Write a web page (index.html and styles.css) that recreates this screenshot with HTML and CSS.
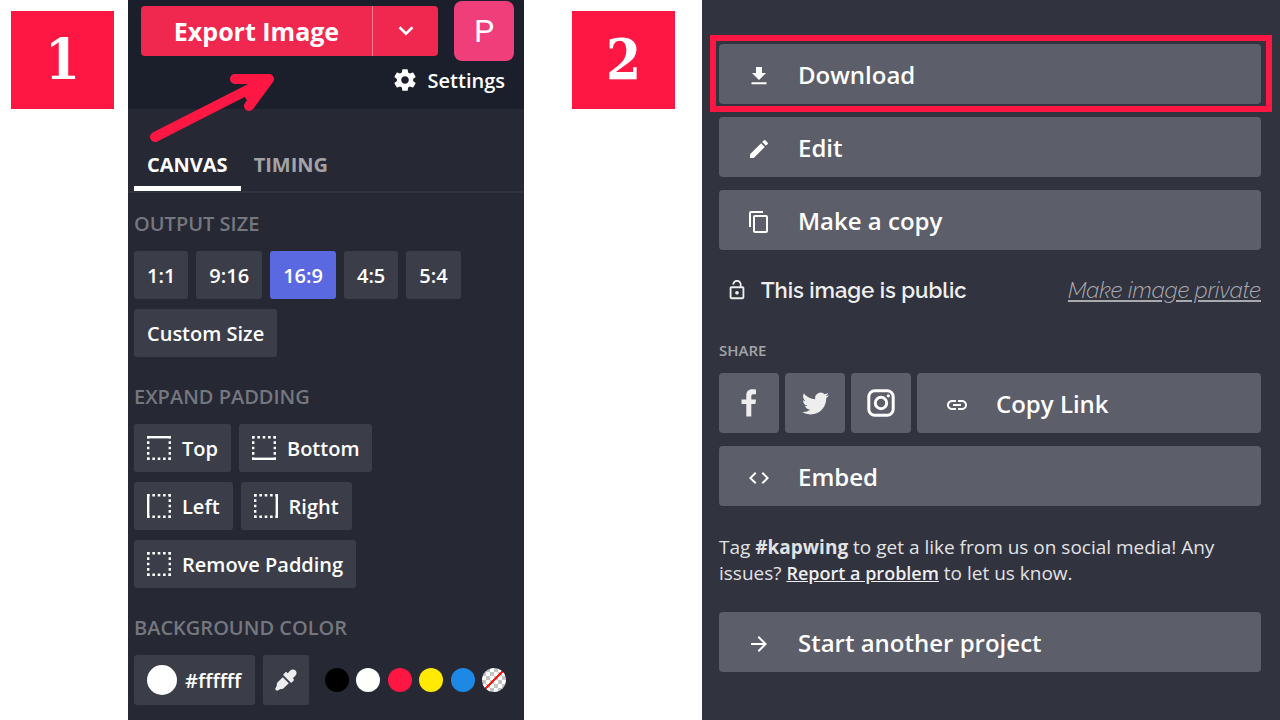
FILE: index.html
```html
<!DOCTYPE html>
<html lang="en">
<head>
<meta charset="utf-8">
<meta name="viewport" content="width=device-width, initial-scale=1">
<title>Export and download</title>
<link rel="stylesheet" href="styles.css">
</head>
<body>
<svg class="defs" aria-hidden="true">
  <defs>
    <path id="dots-h" d="M0 1.200H24" fill="none" stroke="currentColor" stroke-width="2.400" stroke-dasharray="2.600 2.750"/>
    <path id="dots-v" d="M1.200 0V24" fill="none" stroke="currentColor" stroke-width="2.400" stroke-dasharray="2.600 2.750"/>
  </defs>
</svg>
<main class="page">
  <div class="step"><span class="badge">1</span></div>

  <section class="editor" aria-label="Editor">
    <header class="topbar">
      <div class="topbar-row">
        <div class="export">
          <button class="export-main" type="button">Export Image</button>
          <button class="export-more" type="button" aria-label="More export options">
            <svg width="16" height="10" viewBox="0 0 16 10" fill="none" stroke="currentColor" stroke-width="2.6"><path d="M1.5 1.2 8 7.6l6.500-6.400"/></svg>
          </button>
        </div>
        <button class="avatar" type="button" aria-label="Profile P">P</button>
      </div>
      <button class="settings" type="button">
        <svg width="26" height="26" viewBox="0 0 24 24" fill="currentColor"><path d="M19.430 12.980c.04-.32.07-.64.07-.98s-.03-.66-.07-.98l2.110-1.650c.19-.15.24-.42.12-.64l-2-3.460c-.12-.22-.39-.3-.61-.22l-2.490 1c-.52-.4-1.080-.73-1.690-.98l-.38-2.650C14.460 2.180 14.250 2 14 2h-4c-.25 0-.46.18-.49.42l-.38 2.650c-.61.25-1.170.59-1.690.98l-2.490-1c-.23-.09-.49 0-.61.22l-2 3.460c-.13.22-.07.49.12.64l2.110 1.650c-.04.32-.07.65-.07.98s.03.66.07.98l-2.110 1.650c-.19.15-.24.42-.12.64l2 3.460c.12.22.39.3.61.22l2.490-1c.52.4 1.080.73 1.690.98l.38 2.650c.03.24.24.42.49.42h4c.25 0 .46-.18.49-.42l.38-2.650c.61-.25 1.170-.59 1.690-.98l2.490 1c.23.09.49 0 .61-.22l2-3.460c.12-.22.07-.49-.12-.64zM12 15.500c-1.930 0-3.500-1.570-3.500-3.500s1.570-3.500 3.500-3.500 3.500 1.570 3.500 3.500-1.570 3.500-3.500 3.500z"/></svg>
        <span>Settings</span>
      </button>
    </header>

    <nav class="tabs">
      <button class="tab tab-active" type="button">CANVAS</button>
      <button class="tab" type="button">TIMING</button>
    </nav>

    <div class="options">
      <section>
        <h2>OUTPUT SIZE</h2>
        <div class="chips">
          <button class="chip" type="button">1:1</button>
          <button class="chip" type="button">9:16</button>
          <button class="chip chip-on" type="button">16:9</button>
          <button class="chip" type="button">4:5</button>
          <button class="chip" type="button">5:4</button>
          <button class="chip" type="button">Custom Size</button>
        </div>
      </section>
      <section>
        <h2>EXPAND PADDING</h2>
        <div class="chips">
          <button class="chip" type="button"><svg width="24" height="24" viewBox="0 0 24 24"><path d="M0 0h24v2.400H0z" fill="currentColor"/><use href="#dots-h" y="21.600"/><use href="#dots-v"/><use href="#dots-v" x="21.600"/></svg>Top</button>
          <button class="chip" type="button"><svg width="24" height="24" viewBox="0 0 24 24"><path d="M0 21.600h24V24H0z" fill="currentColor"/><use href="#dots-h"/><use href="#dots-v"/><use href="#dots-v" x="21.600"/></svg>Bottom</button>
          <button class="chip" type="button"><svg width="24" height="24" viewBox="0 0 24 24"><path d="M0 0h2.400v24H0z" fill="currentColor"/><use href="#dots-h"/><use href="#dots-h" y="21.600"/><use href="#dots-v" x="21.600"/></svg>Left</button>
          <button class="chip" type="button"><svg width="24" height="24" viewBox="0 0 24 24"><path d="M21.600 0H24v24h-2.400z" fill="currentColor"/><use href="#dots-h"/><use href="#dots-h" y="21.600"/><use href="#dots-v"/></svg>Right</button>
          <button class="chip" type="button"><svg width="24" height="24" viewBox="0 0 24 24"><use href="#dots-h"/><use href="#dots-h" y="21.600"/><use href="#dots-v"/><use href="#dots-v" x="21.600"/></svg>Remove Padding</button>
        </div>
      </section>
      <section>
        <h2 id="bg-label">BACKGROUND COLOR</h2>
        <div class="color-row">
          <div class="hex">
            <span class="hex-dot"></span>
            <input class="hex-input" type="text" value="#ffffff" aria-labelledby="bg-label">
          </div>
          <button class="dropper" type="button" aria-label="Pick a color">
            <svg width="22" height="22" viewBox="0 0 22 22" fill="currentColor"><path d="M20.500 1.500c-1.500-1.500-3.900-1.300-5.300.1l-2.400 2.600-.9-.8c-.5-.5-1.100-.5-1.600 0L8.700 5c-.5.500-.5 1.100 0 1.600l6.700 6.700c.5.500 1.100.5 1.600 0l1.600-1.600c.5-.5.500-1.100 0-1.600l-.8-.9 2.600-2.400c1.400-1.400 1.600-3.800.1-5.300z"/><path d="M7.800 8.200 2.900 13.100c-1 1-1.100 2-1.200 3.900L.4 19.300c-.5 1 .9 2.600 2.300 2.300L5 20.300c1.900-.1 2.900-.2 3.900-1.200l4.900-4.900z"/></svg>
          </button>
          <div class="swatches">
            <button class="swatch black" type="button" aria-label="Black"></button>
            <button class="swatch white" type="button" aria-label="White"></button>
            <button class="swatch red" type="button" aria-label="Red"></button>
            <button class="swatch yellow" type="button" aria-label="Yellow"></button>
            <button class="swatch blue" type="button" aria-label="Blue"></button>
            <button class="swatch clear" type="button" aria-label="Transparent"></button>
          </div>
        </div>
      </section>
    </div>

    <svg class="pointer" width="130" height="76" viewBox="0 0 130 76" fill="none" stroke="#ff1744" stroke-width="10" stroke-linecap="round" stroke-linejoin="round" aria-hidden="true"><path d="M7 69 121 11M87 11h34L101 38M119 12l-17 16"/></svg>
  </section>

  <div class="step step-two"><span class="badge">2</span></div>

  <section class="publish" aria-label="Publish">
    <div class="stack">
      <div class="marked">
        <button class="action" type="button"><svg width="24" height="24" viewBox="0 0 24 24" fill="currentColor"><path d="M19 9h-4V3H9v6H5l7 7 7-7zM4.500 18.300v2h15v-2z"/></svg>Download</button>
      </div>
      <button class="action" type="button"><svg width="24" height="24" viewBox="0 0 24 24" fill="currentColor"><path d="M3 17.250V21h3.750L17.810 9.940l-3.750-3.750zM20.710 7.040a1 1 0 0 0 0-1.410l-2.340-2.340a1 1 0 0 0-1.410 0l-1.830 1.830 3.750 3.750z"/></svg>Edit</button>
      <button class="action" type="button"><svg width="24" height="24" viewBox="0 0 24 24" fill="currentColor"><path d="M16 1H4c-1.100 0-2 .9-2 2v14h2V3h12V1zm3 4H8c-1.100 0-2 .9-2 2v14c0 1.100.9 2 2 2h11c1.100 0 2-.9 2-2V7c0-1.100-.9-2-2-2zm0 16H8V7h11v14z"/></svg>Make a copy</button>
    </div>

    <div class="privacy">
      <svg width="22" height="22" viewBox="0 0 24 24" fill="currentColor"><path d="M12 17c1.100 0 2-.9 2-2s-.9-2-2-2-2 .9-2 2 .9 2 2 2zm6-9h-1V6c0-2.760-2.240-5-5-5S7 3.240 7 6h1.900c0-1.710 1.390-3.100 3.100-3.100s3.100 1.390 3.100 3.100v2H6c-1.100 0-2 .9-2 2v10c0 1.100.9 2 2 2h12c1.100 0 2-.9 2-2V10c0-1.100-.9-2-2-2zm0 12H6V10h12v10z"/></svg>
      <strong>This image is public</strong>
      <a href="#private">Make image private</a>
    </div>

    <h3>SHARE</h3>
    <div class="stack">
      <div class="share">
        <button class="social" type="button" aria-label="Facebook"><svg width="30" height="30" viewBox="0 0 30 30" fill="#eee"><path d="M22 1.500v4.700h-2.700c-1.500 0-2 .7-2 2.100v3.200H22l-.6 4.500h-4.100v12.500h-5V16H7.500v-4.500h4.800V7.400c0-4 2.300-6.100 6-6.100 1.700 0 3 .1 3.700.2z"/></svg></button>
        <button class="social" type="button" aria-label="Twitter"><svg width="27" height="27" viewBox="0 0 24 24" fill="#eee"><path d="M23.950 4.570a10 10 0 0 1-2.820.77 4.960 4.960 0 0 0 2.160-2.720c-.95.550-2 .96-3.130 1.180a4.920 4.920 0 0 0-8.380 4.480C7.690 8.100 4.070 6.130 1.640 3.160a4.820 4.820 0 0 0-.67 2.480c0 1.710.87 3.210 2.190 4.100a4.900 4.900 0 0 1-2.230-.62v.06a4.920 4.920 0 0 0 3.950 4.830 5 5 0 0 1-2.210.08 4.940 4.940 0 0 0 4.600 3.420A9.870 9.870 0 0 1 0 19.540a14 14 0 0 0 7.550 2.210c9.050 0 14-7.500 14-13.990 0-.21 0-.42-.02-.63a9.900 9.900 0 0 0 2.460-2.550z"/></svg></button>
        <button class="social" type="button" aria-label="Instagram"><svg width="28" height="28" viewBox="0 0 28 28" fill="none" stroke="#fff" stroke-width="3"><rect x="1.800" y="1.800" width="24.400" height="24.400" rx="6"/><circle cx="14" cy="14" r="5.700"/><circle cx="21.300" cy="6.800" r="1.600" fill="#fff" stroke="none"/></svg></button>
        <button class="action copy-link" type="button"><svg width="24" height="24" viewBox="0 0 24 24" fill="currentColor"><path d="M3.900 12c0-1.710 1.390-3.100 3.100-3.100h4V7H7c-2.760 0-5 2.240-5 5s2.240 5 5 5h4v-1.900H7c-1.710 0-3.100-1.390-3.100-3.100zM8 13h8v-2H8v2zm9-6h-4v1.900h4c1.710 0 3.100 1.390 3.100 3.100s-1.390 3.100-3.100 3.100h-4V17h4c2.760 0 5-2.240 5-5s-2.240-5-5-5z"/></svg>Copy Link</button>
      </div>
      <button class="action" type="button"><svg width="24" height="24" viewBox="0 0 24 24" fill="currentColor"><path d="M9.400 16.600 4.800 12l4.600-4.600L8 6l-6 6 6 6zM14.600 16.600l4.600-4.600-4.600-4.600L16 6l6 6-6 6z"/></svg>Embed</button>
    </div>

    <p class="note">Tag <b>#kapwing</b> to get a like from us on social media! Any issues? <a href="#report">Report a problem</a> to let us know.</p>

    <button class="action" type="button"><svg width="24" height="24" viewBox="0 0 24 24" fill="currentColor"><path d="m12 4-1.410 1.410L16.170 11H4v2h12.170l-5.580 5.590L12 20l8-8z"/></svg>Start another project</button>
  </section>
</main>
</body>
</html>
```
FILE: styles.css
```css
* {
  box-sizing: border-box;
}

body {
  margin: 0;
  background: #fff;
  color: #fff;
  font-family: "Open Sans", "Noto Sans", sans-serif;
}

button,
input {
  margin: 0;
  padding: 0;
  border: 0;
  background: none;
  color: inherit;
  font: inherit;
}

button {
  cursor: pointer;
}

svg {
  flex: none;
}

.defs {
  position: absolute;
  width: 0;
  height: 0;
}

.page {
  display: grid;
  grid-template-columns: 128fr 396fr 178fr 578fr;
  min-height: 100vh;
}

/* Step badges */

.step {
  padding: 11px 14px 0 11px;
}

.step-two {
  padding: 11px 27px 0 48px;
}

.badge {
  display: flex;
  align-items: center;
  justify-content: center;
  height: 98px;
  padding-bottom: 2px;
  background: #ff1744;
  font-family: "Roboto Slab", "DejaVu Serif Condensed", "DejaVu Serif", serif;
  font-size: 56px;
  font-weight: 700;
  line-height: 56px;
}

/* Editor panel */

.editor {
  position: relative;
  background: #262834;
}

.topbar {
  display: flex;
  flex-direction: column;
  height: 109px;
  padding: 1px 10px 0 13px;
  background: #1a1f2b;
}

.topbar-row {
  display: flex;
  align-items: center;
  gap: 16px;
}

.export {
  display: flex;
  flex: 1;
  height: 50px;
  overflow: hidden;
  border-radius: 4px;
  background: #f02850;
}

.export-main {
  flex: 1;
  font-size: 25px;
  font-weight: 700;
}

.export-more {
  display: flex;
  align-items: center;
  justify-content: center;
  width: 66px;
  border-left: 1px solid #f77a93;
}

.avatar {
  width: 60px;
  height: 60px;
  border-radius: 8px;
  background: #f03e7a;
  font-family: Roboto, sans-serif;
  font-size: 32px;
}

.settings {
  display: flex;
  align-items: center;
  align-self: flex-end;
  gap: 10px;
  height: 38px;
  padding-right: 9px;
  font-size: 20px;
  font-weight: 600;
}

.tabs {
  display: flex;
  height: 84px;
  padding-left: 6px;
  border-bottom: 2px solid #30323d;
}

.tab {
  align-self: flex-end;
  height: 53px;
  padding: 5px 13px 0;
  border-bottom: 5px solid transparent;
  color: #a3a3a5;
  font-size: 20px;
  font-weight: 700;
}

.tab-active {
  border-bottom-color: #fff;
  color: #fff;
}

.options {
  display: flex;
  flex-direction: column;
  gap: 27px;
  padding: 18px 18px 14px 6px;
}

h2 {
  margin: 0 0 14px;
  color: #75777f;
  font-size: 20px;
  font-weight: 600;
  line-height: 26px;
}

.chips {
  display: flex;
  flex-wrap: wrap;
  gap: 10px 8px;
  max-width: 340px;
}

.chip {
  display: flex;
  align-items: center;
  gap: 11px;
  height: 48px;
  padding: 0 13px;
  border-radius: 3px;
  background: #3b3e49;
  font-size: 20px;
  font-weight: 600;
}

.chip-on {
  background: #5a69e0;
}

.color-row {
  display: flex;
  align-items: center;
  gap: 8px;
}

.hex {
  display: flex;
  align-items: center;
  gap: 8px;
  width: 121px;
  height: 50px;
  padding-left: 13px;
  border-radius: 3px;
  background: #3b3e49;
}

.hex-dot {
  flex: none;
  width: 30px;
  height: 30px;
  border-radius: 50%;
  background: #fff;
}

.hex-input {
  flex: 1;
  min-width: 0;
  font-size: 20px;
  font-weight: 600;
}

.dropper {
  display: flex;
  align-items: center;
  justify-content: center;
  width: 46px;
  height: 50px;
  border-radius: 3px;
  background: #3b3e49;
  color: #eee;
}

.swatches {
  display: flex;
  flex: 1;
  justify-content: space-between;
  margin-left: 8px;
}

.swatch {
  width: 24px;
  height: 24px;
  border-radius: 50%;
}

.black { background: #000; }
.white { background: #fff; }
.red { background: #ff1744; }
.yellow { background: #ffea00; }
.blue { background: #1e88e5; }

.clear {
  background:
    linear-gradient(135deg, transparent 47%, #ff1a1a 47%, #ff1a1a 53%, transparent 53%),
    repeating-conic-gradient(#c4c4c4 0 25%, #fff 0 50%) 0 0 / 8px 8px;
}

.pointer {
  position: absolute;
  top: 68px;
  left: 20px;
  pointer-events: none;
}

/* Publish panel */

.publish {
  padding: 44px 19px 44px 17px;
  background: #31333f;
}

.stack {
  display: flex;
  flex-direction: column;
  gap: 13px;
}

.marked {
  position: relative;
}

.marked::after {
  content: "";
  position: absolute;
  inset: -9px -11px -8px -9px;
  border: 6px solid #ff1744;
  pointer-events: none;
}

.action {
  display: flex;
  align-items: center;
  gap: 27px;
  width: 100%;
  height: 60px;
  padding: 0 28px;
  border-radius: 4px;
  background: #5c5e69;
  font-size: 24px;
  font-weight: 600;
}

.action svg {
  margin-top: 4px;
}

.privacy {
  display: flex;
  align-items: center;
  gap: 13px;
  height: 26px;
  margin-top: 27px;
  padding-left: 7px;
  color: #eee;
  font-family: Raleway, Lato, sans-serif;
  font-size: 22px;
}

.privacy strong {
  font-weight: 600;
}

.privacy a {
  margin-left: auto;
  color: #a9aab0;
  font-style: italic;
  font-weight: 300;
}

h3 {
  margin: 37px 0 13px;
  color: #a4a5aa;
  font-size: 15px;
  font-weight: 600;
  line-height: 20px;
}

.share {
  display: flex;
  gap: 6px;
}

.social {
  display: flex;
  align-items: center;
  justify-content: center;
  flex: none;
  width: 60px;
  height: 60px;
  border-radius: 4px;
  background: #5c5e69;
}

.copy-link {
  flex: 1;
}

.note {
  margin: 28px 0 26px;
  color: #e2e2e4;
  font-size: 19px;
  line-height: 26px;
}

.note a {
  color: #eee;
  font-size: 18px;
  font-weight: 600;
}
```
